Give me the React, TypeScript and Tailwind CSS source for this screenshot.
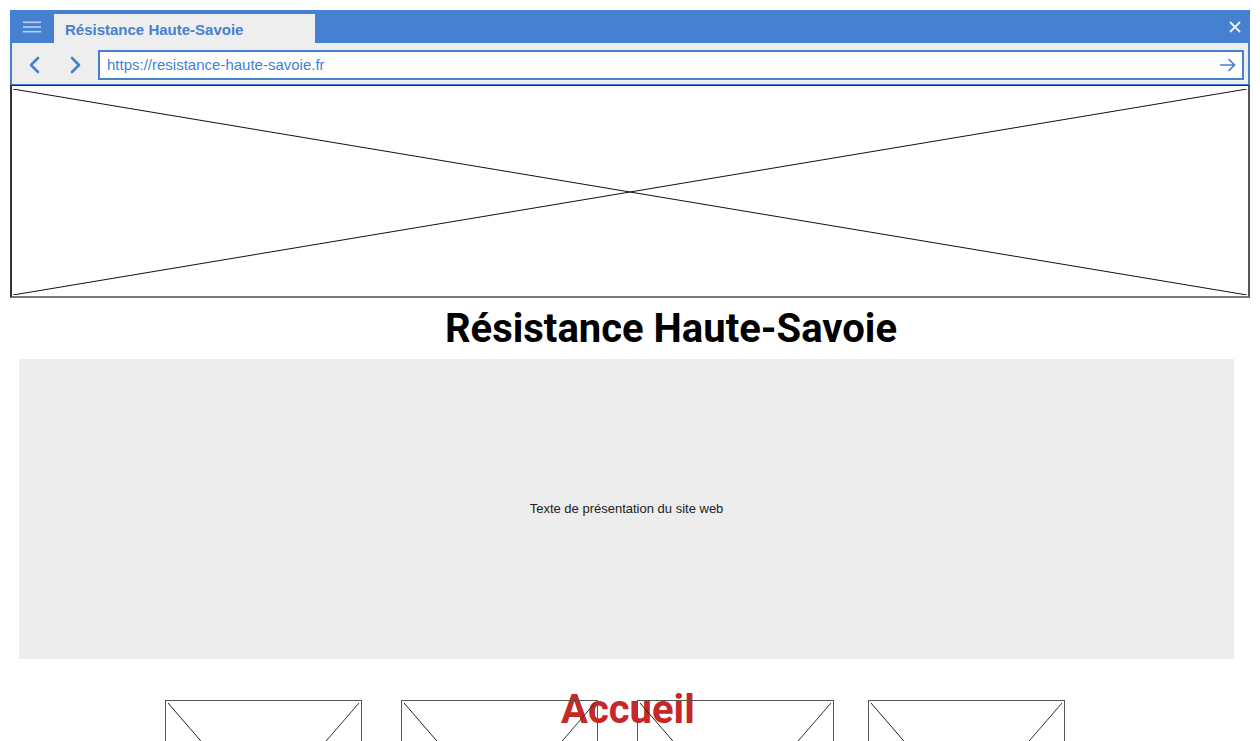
import React from "react";

const BLUE = "#4680d0";

function SmallBox({ className = "" }: { className?: string }) {
  return (
    <div className={"relative w-[197px] h-[227px] shrink-0 border-[1.5px] border-[#555] p-[2px] " + className}>
      <svg className="w-full h-full block" width="100%" height="100%">
        <line x1="0" y1="0" x2="100%" y2="100%" stroke="#222" strokeWidth="1" />
        <line x1="0" y1="100%" x2="100%" y2="0" stroke="#333" strokeWidth="1" />
      </svg>
    </div>
  );
}

export default function App() {
  return (
    <div className="w-[1260px] h-[741px] overflow-hidden bg-white relative font-['Liberation_Sans',Arial,sans-serif]">
      <div className="px-[10px] pt-[10px]">
        {/* title bar */}
        <div className="h-[33px] bg-[#4680d0] flex items-end">
          <div className="w-[44px] h-full flex items-center justify-center">
            <svg width="18" height="12" viewBox="0 0 18 12">
              <rect x="0" y="0.5" width="18" height="1.6" fill="#b9d0f0" />
              <rect x="0" y="5.2" width="18" height="1.6" fill="#b9d0f0" />
              <rect x="0" y="9.9" width="18" height="1.6" fill="#b9d0f0" />
            </svg>
          </div>
          <div className="w-[261px] h-[29px] bg-[#eeeeee] flex items-center pl-[11px] pt-[3px] text-[15px] font-bold text-[#4680d0]">
            Résistance Haute-Savoie
          </div>
          <div className="flex-1" />
          <div className="h-full w-[30px] flex items-center justify-center">
            <svg width="12" height="12" viewBox="0 0 12 12">
              <path d="M1 1L11 11M11 1L1 11" stroke="#eef3fb" strokeWidth="1.8" />
            </svg>
          </div>
        </div>
        {/* nav row */}
        <div className="h-[42px] bg-[#eeeeee] border-x-2 border-b border-[#4680d0] flex items-center pt-[2px]">
          <div className="w-[29px] flex justify-end">
            <svg width="14" height="18" viewBox="0 0 14 18">
              <path d="M11 2L4 9L11 16" fill="none" stroke={BLUE} strokeWidth="2.6" strokeLinecap="round" strokeLinejoin="round" />
            </svg>
          </div>
          <div className="w-[42px] flex justify-end">
            <svg width="14" height="18" viewBox="0 0 14 18">
              <path d="M3 2L10 9L3 16" fill="none" stroke={BLUE} strokeWidth="2.6" strokeLinecap="round" strokeLinejoin="round" />
            </svg>
          </div>
          <div className="ml-[15px] w-[1146px] h-[30px] bg-white border-2 border-[#4680d0] flex items-center pl-[7px] pr-[6px]">
            <span className="text-[15px] text-[#4680d0] flex-1 pt-[2px]">https://resistance-haute-savoie.fr</span>
            <svg width="17" height="14" viewBox="0 0 17 14">
              <path d="M1 7H15.5M9.5 1L15.5 7L9.5 13" fill="none" stroke={BLUE} strokeWidth="1.7" />
            </svg>
          </div>
        </div>
      </div>
      {/* hero image placeholder */}
      <div className="mx-[10px] h-[213px] border-t border-[#1a2a44] border-x-2 border-b-2 border-l-[#333] border-r-[#555] border-b-[#777] px-[1px] pt-[3px] pb-[1px]">
        <svg className="w-full h-full block" width="100%" height="100%">
          <line x1="0" y1="0" x2="100%" y2="100%" stroke="#111" strokeWidth="1" />
          <line x1="0" y1="100%" x2="100%" y2="0" stroke="#111" strokeWidth="1" />
        </svg>
      </div>
      {/* title */}
      <div className="h-[61px] flex items-center justify-center pl-[82px]">
        <h1 className="font-['Roboto',sans-serif] font-bold text-[40px] text-black leading-none">Résistance Haute-Savoie</h1>
      </div>
      {/* presentation box */}
      <div className="ml-[19px] w-[1215px] h-[300px] bg-[#ededed] flex items-center justify-center">
        <span className="text-[13px] text-[#222]">Texte de présentation du site web</span>
      </div>
      {/* bottom */}
      <div className="relative mt-[41px]">
        <div className="absolute left-[561px] top-[-10px] font-['Roboto',sans-serif] font-bold text-[40px] leading-none text-[#c62828]">
          Accueil
        </div>
        <div className="flex pl-[165px]">
          <SmallBox />
          <SmallBox className="ml-[39px]" />
          <SmallBox className="ml-[39px]" />
          <SmallBox className="ml-[34px]" />
        </div>
      </div>
    </div>
  );
}
